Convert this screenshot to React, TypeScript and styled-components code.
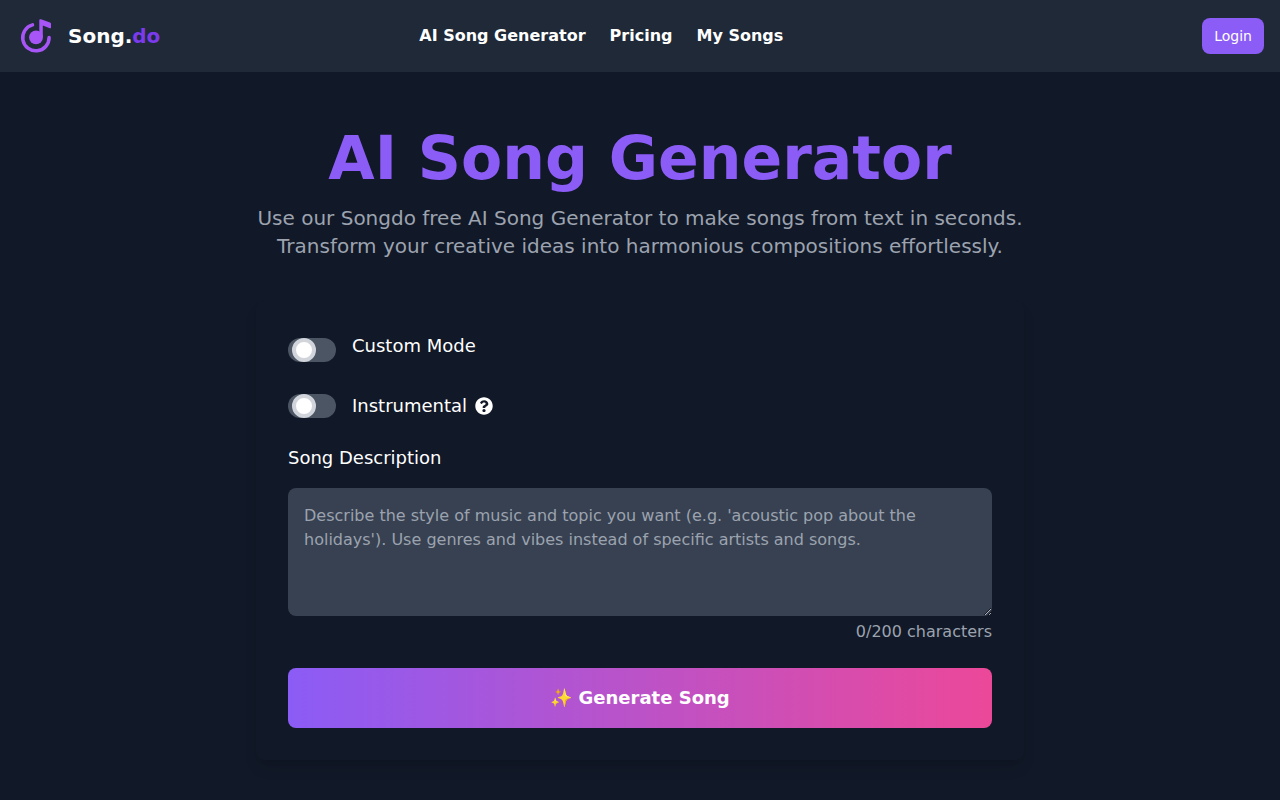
import React, { useState } from "react";
import styled, { createGlobalStyle } from "styled-components";
import { FaQuestionCircle } from "react-icons/fa";

const GlobalStyle = createGlobalStyle`
  *, *::before, *::after { box-sizing: border-box; }
  body {
    margin: 0;
    background: #111827;
    color: #fff;
    font-family: "DejaVu Sans", sans-serif;
    font-size: 16px;
    line-height: 24px;
  }
  button, textarea, input { font: inherit; }
`;

const Header = styled.header`
  display: flex;
  align-items: center;
  padding: 16px;
  background: #1f2937;
`;

const Brand = styled.a`
  display: flex;
  align-items: center;
  gap: 12px;
  color: #fff;
  font-size: 20px;
  line-height: 28px;
  font-weight: 700;
  text-decoration: none;
`;

const BrandAccent = styled.span`
  color: #7c3aed;
`;

const Nav = styled.nav`
  flex: 1;
  display: flex;
  justify-content: center;
  gap: 24px;
  padding-right: 160px;
`;

const NavLink = styled.a`
  color: #fff;
  font-weight: 600;
  text-decoration: none;
`;

const LoginButton = styled.button`
  padding: 8px 12px;
  border: 0;
  border-radius: 8px;
  background: #8b5cf6;
  color: #fff;
  font-size: 14px;
  line-height: 20px;
  cursor: pointer;
`;

const Main = styled.main`
  max-width: 800px;
  margin: 0 auto;
  padding: 56px 16px 40px;
`;

const Title = styled.h1`
  margin: 0 0 16px;
  color: #8b5cf6;
  font-size: 60px;
  line-height: 60px;
  font-weight: 700;
  text-align: center;
`;

const Subtitle = styled.p`
  margin: 0 0 40px;
  color: #9ca3af;
  font-size: 20px;
  line-height: 28px;
  text-align: center;
`;

const Card = styled.form`
  display: flex;
  flex-direction: column;
  gap: 24px;
  padding: 32px;
  border-radius: 8px;
  background: #111827;
  box-shadow: 0 10px 15px -3px rgba(0, 0, 0, 0.1), 0 4px 6px -4px rgba(0, 0, 0, 0.1);
`;

const ToggleRow = styled.div`
  display: flex;
  align-items: center;
  gap: 16px;
`;

const Switch = styled.input`
  appearance: none;
  flex: none;
  display: flex;
  width: 48px;
  height: 24px;
  margin: 0;
  padding: 0 4px;
  border-radius: 12px;
  background: #4b5563;
  cursor: pointer;

  &::before {
    content: "";
    width: 24px;
    height: 24px;
    border: 4px solid #d1d5db;
    border-radius: 50%;
    background: #fff;
  }

  &:checked {
    justify-content: flex-end;
    background: #8b5cf6;
  }
`;

const Label = styled.label<{ $space?: number }>`
  display: block;
  margin-bottom: ${(p) => p.$space ?? 0}px;
  font-size: 18px;
  line-height: 28px;
`;

const LabelGroup = styled.div`
  display: flex;
  align-items: center;
  gap: 8px;
`;

const Description = styled.textarea`
  display: block;
  width: 100%;
  height: 128px;
  padding: 16px;
  border: 0;
  border-radius: 8px;
  background: #374151;
  color: #fff;
  resize: vertical;

  &::placeholder { color: #9ca3af; }
`;

const Counter = styled.div`
  margin-top: 4px;
  color: #9ca3af;
  text-align: right;
`;

const GenerateButton = styled.button`
  width: 100%;
  padding: 16px;
  border: 0;
  border-radius: 8px;
  background: linear-gradient(to right, #8b5cf6, #ec4899);
  color: #fff;
  font-size: 18px;
  line-height: 28px;
  font-weight: 700;
  cursor: pointer;
`;

function Logo() {
  return (
    <svg width="40" height="40" viewBox="0 0 40 40" fill="none" aria-hidden="true">
      <path
        d="M16.5 8.9A13.2 13.2 0 1 0 33.1 21.5"
        stroke="#a855f7"
        strokeWidth="3.5"
        strokeLinecap="round"
      />
      <circle cx="20" cy="21.4" r="6.9" fill="#a855f7" />
      <path d="M23.3 21.5V4.4C23.3 3.4 24 3 25 3.3L34 6.6C34.7 6.9 35 7.3 35 8V11.4C35 12.2 34.5 12.5 33.8 12.2L26.8 9.6V21.5Z" fill="#a855f7" />
    </svg>
  );
}

export default function App() {
  const [text, setText] = useState("");
  return (
    <>
      <GlobalStyle />
      <Header>
        <Brand href="#">
          <Logo />
          <span>Song.<BrandAccent>do</BrandAccent></span>
        </Brand>
        <Nav>
          <NavLink href="#generator">AI Song Generator</NavLink>
          <NavLink href="#pricing">Pricing</NavLink>
          <NavLink href="#songs">My Songs</NavLink>
        </Nav>
        <LoginButton type="button">Login</LoginButton>
      </Header>
      <Main>
        <Title>AI Song Generator</Title>
        <Subtitle>
          Use our Songdo free AI Song Generator to make songs from text in seconds. Transform your
          creative ideas into harmonious compositions effortlessly.
        </Subtitle>
        <Card onSubmit={(e) => e.preventDefault()}>
          <ToggleRow>
            <Switch id="custom" type="checkbox" />
            <Label htmlFor="custom" $space={8}>Custom Mode</Label>
          </ToggleRow>
          <ToggleRow>
            <Switch id="instrumental" type="checkbox" />
            <LabelGroup>
              <Label htmlFor="instrumental">Instrumental</Label>
              <FaQuestionCircle size={18} aria-hidden="true" />
            </LabelGroup>
          </ToggleRow>
          <div>
            <Label htmlFor="description" $space={16}>Song Description</Label>
            <Description
              id="description"
              maxLength={200}
              value={text}
              onChange={(e) => setText(e.target.value)}
              placeholder="Describe the style of music and topic you want (e.g. 'acoustic pop about the holidays'). Use genres and vibes instead of specific artists and songs."
            />
            <Counter>{text.length}/200 characters</Counter>
          </div>
          <GenerateButton type="submit">✨ Generate Song</GenerateButton>
        </Card>
      </Main>
    </>
  );
}
